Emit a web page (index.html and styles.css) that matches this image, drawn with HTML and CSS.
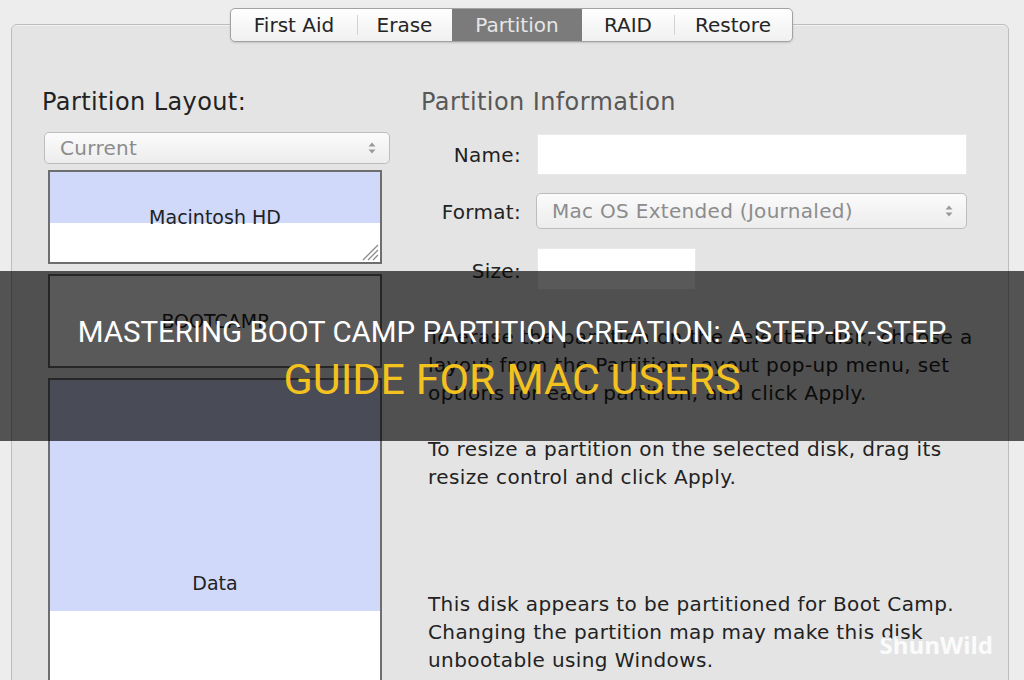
FILE: index.html
```html
<!DOCTYPE html>
<html>
<head>
    <title>Disk Utility - Partition</title>
    <link rel="stylesheet" href="styles.css">
</head>
<body>
    <div class="window">
        <div class="tabs">
            <div class="tab">First Aid</div>
            <div class="tab">Erase</div>
            <div class="tab selected">Partition</div>
            <div class="tab">RAID</div>
            <div class="tab">Restore</div>
        </div>

        <div class="panel">
            <div class="layout-col">
                <h2 class="section-title">Partition Layout:</h2>
                <div class="popup layout-popup">
                    <span>Current</span>
                    <svg class="stepper" width="8" height="12" viewBox="0 0 8 12"><path d="M4 0.5 L7.5 4.5 H0.5 Z M4 11.5 L7.5 7.5 H0.5 Z" fill="#9a9a9a"/></svg>
                </div>
                <div class="map">
                    <div class="part part-mac" style="--used: 57%">
                        <span class="part-name">Macintosh HD</span>
                        <svg class="grip" width="18" height="18" viewBox="0 0 18 18">
                            <path d="M2 17 L17 2 M7 17 L17 7 M12 17 L17 12" stroke="#8a8a8a" stroke-width="1.3"/>
                        </svg>
                    </div>
                    <div class="part part-boot" style="--used: 0%">
                        <span class="part-name">BOOTCAMP</span>
                    </div>
                    <div class="part part-data" style="--used: 57%">
                        <span class="part-name">Data</span>
                    </div>
                </div>
            </div>

            <div class="info-col">
                <h2 class="section-title info-title">Partition Information</h2>
                <div class="form">
                    <label class="form-label">Name:</label>
                    <div class="text-field name-field"></div>

                    <label class="form-label">Format:</label>
                    <div class="popup format-popup">
                        <span>Mac OS Extended (Journaled)</span>
                        <svg class="stepper" width="8" height="12" viewBox="0 0 8 12"><path d="M4 0.5 L7.5 4.5 H0.5 Z M4 11.5 L7.5 7.5 H0.5 Z" fill="#9a9a9a"/></svg>
                    </div>

                    <label class="form-label size-label">Size:</label>
                    <div class="text-field size-field"></div>
                </div>

                <p class="help first">To erase the partition on the selected disk, choose a layout from the Partition Layout pop-up menu, set options for each partition, and click Apply.</p>
                <p class="help">To resize a partition on the selected disk, drag its resize control and click Apply.</p>
                <p class="help warning">This disk appears to be partitioned for Boot Camp. Changing the partition map may make this disk unbootable using Windows.</p>
            </div>
        </div>
    </div>

    <!-- title banner over the screenshot -->
    <div class="banner">
        <div class="banner-line">MASTERING BOOT CAMP PARTITION CREATION: A STEP-BY-STEP</div>
        <div class="banner-line accent">GUIDE FOR MAC USERS</div>
    </div>

    <div class="watermark">ShunWild</div>
</body>
</html>
```

FILE: styles.css
```css
body {
    margin: 0;
    width: 1024px;
    height: 680px;
    overflow: hidden;
    position: relative;
    background-color: #ededed;
    font-family: "DejaVu Sans", "Liberation Sans", sans-serif;
    color: #222;
}
.window {
    padding: 8px 15px 0 11px;
}
.tabs {
    position: relative;
    z-index: 1;
    display: flex;
    width: max-content;
    height: 32px;
    margin: 0 auto 0 219px;
    border: 1px solid #a2a2a2;
    border-radius: 5px;
    background: linear-gradient(#ffffff, #f0f0f0);
    box-shadow: 0 1px 2px rgba(0,0,0,0.15);
    overflow: hidden;
}
.tab {
    display: flex;
    align-items: center;
    justify-content: center;
    font-size: 20px;
    color: #252525;
    position: relative;
}
.tab:nth-child(1) { width: 126px; }
.tab:nth-child(2) { width: 95px; }
.tab:nth-child(3) { width: 130px; }
.tab:nth-child(4) { width: 92px; }
.tab:nth-child(5) { width: 118px; }
.tab:nth-child(2)::before,
.tab:nth-child(5)::before {
    content: "";
    position: absolute;
    left: 0;
    top: 6px;
    bottom: 6px;
    border-left: 1px solid #d2d2d2;
}
.tab.selected {
    background: #7b7b7b;
    color: #e6e6e6;
}
.panel {
    margin-top: -18px;
    min-height: 700px;
    border: 1px solid #bdbdbd;
    border-radius: 6px;
    background-color: #e4e4e4;
    box-shadow: inset 0 1px 0 #f2f2f2;
    padding: 63px 40px 0 30px;
    display: grid;
    grid-template-columns: 348px 1fr;
    column-gap: 31px;
}
.section-title {
    margin: 0;
    font-size: 24px;
    line-height: 28px;
    letter-spacing: 0.4px;
    font-weight: normal;
    color: #222;
}
.info-title {
    color: #585858;
}
.popup {
    display: flex;
    align-items: center;
    justify-content: space-between;
    box-sizing: border-box;
    border: 1px solid #bdbdbd;
    border-radius: 5px;
    background: linear-gradient(#fbfbfb, #ececec);
    color: #8c8c8c;
    font-size: 20px;
    letter-spacing: 0.3px;
}
.layout-popup {
    height: 32px;
    margin: 16px 0 0 2px;
    padding: 0 13px 0 15px;
}
.stepper {
    flex: none;
}
.map {
    margin: 6px 8px 0 6px;
    display: flex;
    flex-direction: column;
    gap: 10px;
}
.part {
    position: relative;
    display: flex;
    align-items: center;
    justify-content: center;
    border: 2px solid #6e6e6e;
    background: linear-gradient(#d0d9fa 0, #d0d9fa var(--used), #ffffff var(--used));
    font-size: 19px;
    color: #222;
}
.part-mac {
    height: 90px;
}
.part-boot {
    height: 90px;
}
.part-data {
    height: 406px;
}
.grip {
    position: absolute;
    right: 1px;
    bottom: 1px;
}
.form {
    display: grid;
    grid-template-columns: 100px 430px;
    column-gap: 16px;
    align-items: center;
    margin-top: 18px;
}
.form-label {
    text-align: right;
    font-size: 20px;
    letter-spacing: 0.3px;
    color: #222;
}
.text-field {
    box-sizing: border-box;
    background-color: #ffffff;
    border: 1px solid #e9e9e9;
}
.name-field {
    height: 41px;
}
.format-popup {
    height: 36px;
    margin: 18px 0 19px -1px;
    padding: 0 13px 0 15px;
}
.size-field {
    width: 159px;
    height: 42px;
}
.size-label {
    align-self: end;
    margin-bottom: 7px;
}
.help {
    margin: 0;
    padding-left: 7px;
    width: 548px;
    font-size: 20px;
    line-height: 28px;
    letter-spacing: 0.4px;
    color: #222;
}
.help.first {
    margin-top: 33px;
    margin-bottom: 28px;
}
.help.warning {
    margin-top: 99px;
}
.banner {
    position: absolute;
    left: 0;
    right: 0;
    top: 271px;
    height: 170px;
    background-color: rgba(0,0,0,0.65);
    display: flex;
    flex-direction: column;
    align-items: center;
    justify-content: center;
    font-family: Roboto, "Liberation Sans", sans-serif;
    color: #ffffff;
}
.banner-line {
    font-size: 29.5px;
    line-height: 47px;
}
.banner-line.accent {
    font-size: 43px;
    color: #f4c21f;
}
.watermark {
    position: absolute;
    right: 31px;
    top: 628px;
    font-family: "Open Sans", "Liberation Sans", sans-serif;
    font-weight: 700;
    font-size: 24px;
    color: rgba(255,255,255,0.9);
}
```
